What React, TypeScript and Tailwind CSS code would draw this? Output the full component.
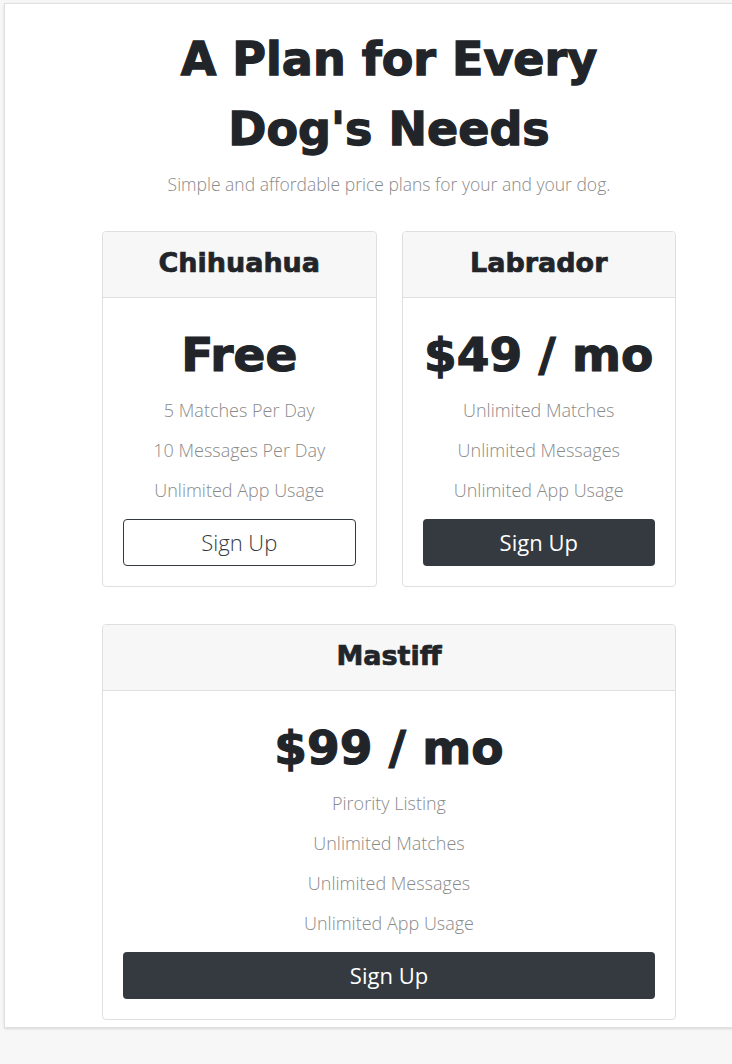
const plans = [
  { name: 'Chihuahua', price: 'Free', features: ['5 Matches Per Day', '10 Messages Per Day', 'Unlimited App Usage'], outline: true },
  { name: 'Labrador', price: '$49 / mo', features: ['Unlimited Matches', 'Unlimited Messages', 'Unlimited App Usage'], outline: false },
];

const mastiff = {
  name: 'Mastiff',
  price: '$99 / mo',
  features: ['Pirority Listing', 'Unlimited Matches', 'Unlimited Messages', 'Unlimited App Usage'],
  outline: false,
};

// heavy display face, thickened a bit to read like a black weight
const heavy = "font-['DejaVu_Sans',sans-serif] font-bold";
const light = "font-['Open_Sans','Liberation_Sans',sans-serif] font-light";

type Plan = typeof mastiff;

function PlanCard({ plan, className = '' }: { plan: Plan; className?: string }) {
  return (
    <div className={`flex flex-col rounded border border-[#dfdfdf] bg-white ${className}`}>
      <div className="flex h-[66px] items-center justify-center rounded-t border-b border-[#dfdfdf] bg-[#f7f7f7] pb-[3px]">
        <h3 className={`${heavy} text-[27px] text-[#212529] [-webkit-text-stroke:0.7px_#212529]`}>{plan.name}</h3>
      </div>
      <div className="flex flex-col px-5 pb-5 pt-[25px] text-center">
        <h1
          className={`${heavy} -mx-3 mb-[3px] whitespace-nowrap text-[47px] leading-[64px] text-[#212529] [-webkit-text-stroke:1.2px_#212529]`}
        >
          {plan.price}
        </h1>
        <ul>
          {plan.features.map(f => (
            <li key={f} className={`${light} text-[18px] leading-[40px] text-[#8a8a8a]`}>{f}</li>
          ))}
        </ul>
        <button
          className={`${light} mt-[9px] h-[47px] w-full rounded text-[22px] ${
            plan.outline ? 'border border-[#343a40] bg-white text-[#343a40]' : 'bg-[#343a40] font-normal text-white'
          }`}
        >
          Sign Up
        </button>
      </div>
    </div>
  );
}

export default function App() {
  return (
    <div className="min-h-[1064px] w-[732px] overflow-hidden bg-[#f7f7f7] pt-[3px]">
      <div className="ml-[4px] w-[770px] border border-[#e0e0e0] bg-white pb-[7px] shadow-sm">
        <div className="pt-[20px] text-center">
          <h1 className={`${heavy} text-[46px] leading-[70px] text-[#212529] [-webkit-text-stroke:1.3px_#212529]`}>
            A Plan for Every
            <br />
            Dog's Needs
          </h1>
          <p className={`${light} mt-[8px] text-[17.5px] leading-[24px] text-[#8a8a8a]`}>
            Simple and affordable price plans for your and your dog.
          </p>
        </div>

        <div className="mx-[97px] mt-[35px] flex flex-col gap-[37px]">
          <div className="grid grid-cols-2 gap-[25px]">
            {plans.map(p => (
              <PlanCard key={p.name} plan={p} />
            ))}
          </div>
          <PlanCard plan={mastiff} />
        </div>
      </div>
    </div>
  );
}
